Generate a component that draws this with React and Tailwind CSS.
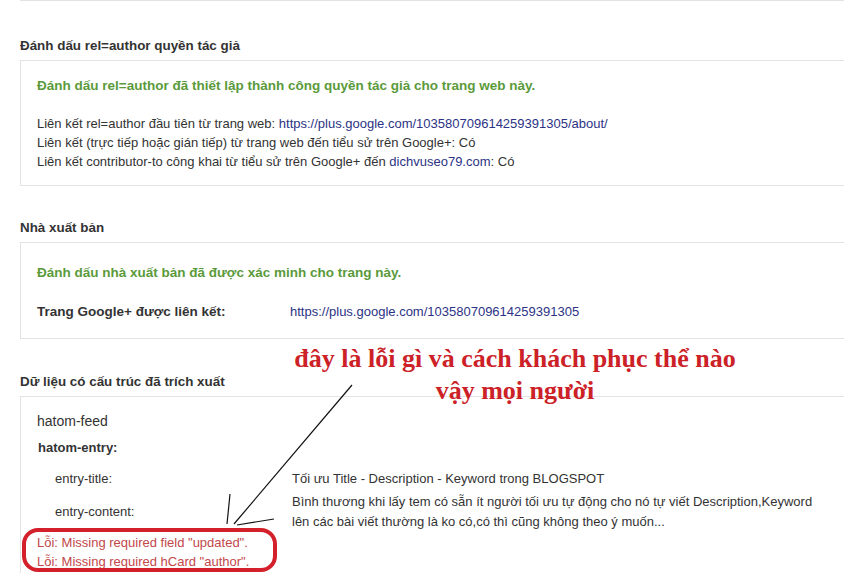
const font = { fontFamily: '"Liberation Sans", Arial, "Noto Sans", sans-serif' };

function Heading({ children }) {
  return <h3 className="text-[13.4px] leading-[16px] font-bold text-[#333]">{children}</h3>;
}

function Box({ className = "", children }) {
  return (
    <div className={`border border-r-0 border-[#e3e3e3] bg-white pl-[16px] ${className}`}>
      {children}
    </div>
  );
}

function Link({ children }) {
  return <span className="text-[#2c3385]">{children}</span>;
}

export default function App() {
  return (
    <div className="relative h-[573px] w-[844px] overflow-hidden bg-white" style={font}>
      <div className="pl-[20px]">
        <div className="h-px border-b border-[#e3e3e3]" />

        {/* rel=author */}
        <div className="mt-[37px]">
          <Heading>Đánh dấu rel=author quyền tác giả</Heading>
          <Box className="mt-[6px] h-[126px] pt-[17px]">
            <p className="text-[13.5px] leading-[16px] font-bold text-[#5b9a3b]">
              Đánh dấu rel=author đã thiết lập thành công quyền tác giả cho trang web này.
            </p>
            <div className="mt-[20px] text-[13px] leading-[19px] text-[#333]">
              <p>
                Liên kết rel=author đầu tiên từ trang web:{" "}
                <Link>https://plus.google.com/103580709614259391305/about/</Link>
              </p>
              <p>Liên kết (trực tiếp hoặc gián tiếp) từ trang web đến tiểu sử trên Google+: Có</p>
              <p>
                Liên kết contributor-to công khai từ tiểu sử trên Google+ đến <Link>dichvuseo79.com</Link>: Có
              </p>
            </div>
          </Box>
        </div>

        {/* publisher */}
        <div className="mt-[34px]">
          <Heading>Nhà xuất bản</Heading>
          <Box className="mt-[6px] h-[97px] pt-[22px]">
            <p className="text-[13.5px] leading-[16px] font-bold text-[#5b9a3b]">
              Đánh dấu nhà xuất bản đã được xác minh cho trang này.
            </p>
            <div className="mt-[23px] grid grid-cols-[253px_1fr] items-center">
              <span className="text-[13.5px] leading-[16px] font-bold text-[#333]">Trang Google+ được liên kết:</span>
              <span className="text-[13px] leading-[16px]">
                <Link>https://plus.google.com/103580709614259391305</Link>
              </span>
            </div>
          </Box>
        </div>

        {/* structured data */}
        <div className="mt-[35px]">
          <Heading>Dữ liệu có cấu trúc đã trích xuất</Heading>
          <Box className="mt-[6px] h-[200px] pt-[15px]">
            <p className="text-[14px] leading-[18px] text-[#333]">hatom-feed</p>
            <p className="mt-[10px] pl-[1px] text-[13px] leading-[16px] font-bold text-[#333]">hatom-entry:</p>
            <div className="mt-[10px] grid grid-cols-[255px_1fr] text-[13px] text-[#333]">
              <span className="pl-[18px] leading-[26px]">entry-title:</span>
              <span className="leading-[26px]">Tối ưu Title - Description - Keyword trong BLOGSPOT</span>
              <span className="flex items-center pl-[18px]">entry-content:</span>
              <span className="leading-[20px]">
                Bình thương khi lấy tem có sẵn ít người tối ưu tự động cho nó tự viết Description,Keyword
                <br />
                lên các bài viết thường là ko có,có thì cũng không theo ý muốn...
              </span>
            </div>
            <div className="mt-[1px] text-[13px] leading-[19px] text-[#c2484a]">
              <p>Lỗi: Missing required field "updated".</p>
              <p>Lỗi: Missing required hCard "author".</p>
            </div>
          </Box>
        </div>
      </div>

      {/* annotation overlay */}
      <div
        className="absolute left-[260px] top-[343px] w-[510px] text-center text-[26px] leading-[32px] font-bold text-[#cc2127]"
        style={{ fontFamily: '"Liberation Serif", "Times New Roman", serif' }}
      >
        đây là lỗi gì và cách khách phục thể nào
        <br />
        vậy mọi người
      </div>
      <svg className="pointer-events-none absolute left-0 top-0" width="844" height="573">
        <line x1="352" y1="385" x2="234" y2="524" stroke="#111" strokeWidth="1.2" />
        <line x1="230" y1="494" x2="227" y2="524" stroke="#111" strokeWidth="1.2" />
        <line x1="237" y1="525" x2="274" y2="519" stroke="#111" strokeWidth="1.2" />
      </svg>
      <div className="absolute left-[22px] top-[528px] h-[44px] w-[255px] rounded-[16px] border-[4px] border-[#d3202a]" />
    </div>
  );
}
